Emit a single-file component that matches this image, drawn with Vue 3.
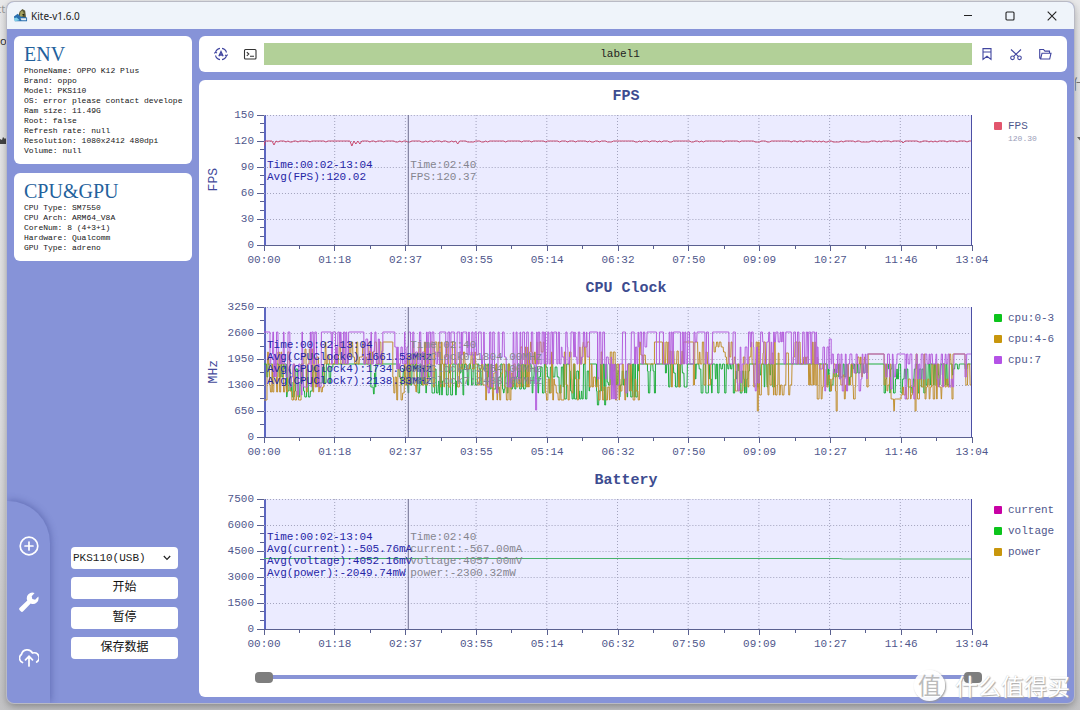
<script setup>
import { ref } from 'vue'

const phoneInfo = [
  'PhoneName: OPPO K12 Plus',
  'Brand: oppo',
  'Model: PKS110',
  'OS: error please contact develope',
  'Ram size: 11.49G',
  'Root: false',
  'Refresh rate: null',
  'Resolution: 1080x2412 480dpi',
  'Volume: null'
]
const chipInfo = [
  'CPU Type: SM7550',
  'CPU Arch: ARM64_V8A',
  'CoreNum: 8 (4+3+1)',
  'Hardware: Qualcomm',
  'GPU Type: adreno'
]
const times = ['00:00', '01:18', '02:37', '03:55', '05:14', '06:32', '07:50', '09:09', '10:27', '11:46', '13:04']

function makeRandom(seed) {
  let s = seed
  return () => {
    s = (s * 16807) % 2147483647
    return s / 2147483647
  }
}

// Each segment is [from, to, levels]; one level draws a plateau, several draw stepped noise.
function trace(segments, seed) {
  const rnd = makeRandom(seed)
  let d = ''
  let last = -1
  for (const [from, to, levels] of segments) {
    let x = from
    while (x < to) {
      let y = levels[Math.floor(rnd() * levels.length)]
      if (y === last && levels.length > 1) y = levels[Math.floor(rnd() * levels.length)]
      last = y
      const hold = levels.length === 1 ? to - x : 0.3 + rnd() * 1.5
      d += (d ? 'L' : 'M') + x.toFixed(1) + ' ' + y
      x += hold
      d += 'L' + Math.min(x, to).toFixed(1) + ' ' + y
      x += 0.4
    }
  }
  return d
}

function fpsTrace() {
  const rnd = makeRandom(77)
  const dips = { 10: 30, 89: 31, 92: 29, 96: 29, 194: 29, 640: 28 }
  let d = 'M0 31L1 26'
  for (let x = 2; x <= 708; x += 2) {
    const key = x in dips ? x : x + 1
    const y = dips[key] ?? (rnd() > 0.72 ? 27 : 26)
    d += `L${x} ${y}`
  }
  return d
}

const greenSegments = [
  [0, 20, [57, 57, 70]], [20, 50, [57, 65, 75, 84, 90, 62]], [50, 69, [57, 60, 76]], [69, 100, [57]],
  [100, 107, [57]], [107, 112, [57, 66, 80, 87]], [112, 134, [57]], [134, 175, [57, 62, 70, 78, 86]],
  [175, 200, [57, 57, 66, 74, 88]], [200, 225, [57, 62, 78]], [225, 262, [57, 57, 70, 82, 86]],
  [262, 300, [57, 60, 70, 80, 86]], [300, 326, [57, 57, 64, 84, 92]], [326, 333, [57]],
  [333, 345, [57, 75, 98, 84]], [345, 376, [57, 64, 78, 90]], [376, 384, [57]], [384, 392, [57, 64, 86]],
  [392, 402, [57]], [402, 424, [57, 57, 66, 80]], [424, 432, [57]], [432, 470, [57, 57, 57, 62, 72, 86]],
  [470, 486, [57, 64, 72, 86]], [486, 494, [57]], [494, 512, [57, 57, 68, 80]], [512, 564, [57]],
  [564, 590, [57, 62, 70, 78, 84]], [590, 604, [57, 57, 66]], [604, 621, [57]],
  [621, 662, [57, 62, 72, 80, 86]], [662, 690, [57, 57, 68, 78]], [690, 708, [57, 57, 57, 62]]
]
const goldSegments = [
  [0, 3, [93]], [3, 26, [57, 45, 57, 78, 85]], [26, 40, [93, 57, 84, 93]], [40, 60, [42, 57, 80, 85, 50]],
  [60, 86, [35, 48, 57, 57]], [86, 104, [35, 50, 57]], [104, 119, [45, 57, 57, 35]], [119, 129, [35]],
  [129, 142, [57, 86, 93, 70]], [142, 168, [35, 48, 57, 78, 85]], [168, 196, [35, 35, 50, 57, 80]],
  [196, 222, [45, 57, 62, 78, 87]], [222, 250, [57, 66, 80, 93, 93]], [250, 266, [40, 57, 72, 80]],
  [266, 282, [35, 35, 45, 57]], [282, 316, [45, 57, 72, 78, 86, 93]], [316, 326, [35, 40, 57]],
  [326, 356, [45, 57, 70, 80, 93]], [356, 376, [57, 72, 84, 93]], [376, 384, [35, 48, 57]],
  [384, 391, [57]], [391, 399, [35]], [399, 420, [35, 44, 57, 57, 80]], [420, 430, [35]],
  [430, 452, [35, 45, 57, 78]], [452, 462, [35, 40, 45]], [462, 472, [35, 50, 57]],
  [472, 480, [57, 72, 84]], [480, 494, [35, 50, 57, 80]], [494, 495, [104]],
  [495, 530, [35, 46, 57, 78, 88]], [530, 554, [35, 35, 50, 57, 78]], [554, 566, [57, 68, 80, 92]],
  [566, 573, [57, 72, 84]], [573, 574, [104]], [574, 592, [57, 68, 78, 92]],
  [592, 605, [50, 57, 70, 80]], [605, 621, [47]], [621, 628, [57, 78, 84]],
  [628, 634, [92, 104]], [634, 638, [92]], [638, 652, [80, 92, 72, 88]], [652, 653, [104]],
  [653, 690, [47, 57, 72, 80, 92]], [690, 702, [47]], [702, 708, [47, 57, 78]]
]
const purpleSegments = [
  [0, 6, [25]], [6, 26, [25, 25, 57, 47, 70]], [26, 38, [57, 70, 80, 88]], [38, 58, [25, 25, 57, 80]],
  [58, 66, [25]], [66, 72, [25, 57]], [72, 86, [25, 25, 57, 40]], [86, 100, [25]],
  [100, 119, [25, 32, 57, 44]], [119, 131, [25]], [131, 146, [25, 40, 57, 62]],
  [146, 176, [25, 25, 57, 45, 70]], [176, 182, [25]], [182, 198, [25, 25, 57]],
  [198, 220, [25, 48, 57, 25]], [220, 248, [25, 50, 64, 80, 86]],
  [248, 272, [25, 25, 57, 72]], [272, 273, [103]], [273, 296, [25, 25, 57]],
  [296, 326, [25, 25, 40, 57, 50]], [326, 334, [25]], [334, 348, [25, 57, 50, 72]],
  [348, 356, [57, 78, 92]], [356, 372, [25, 25, 57, 57, 86]], [372, 386, [25, 40, 57, 25]],
  [386, 393, [25]], [393, 396, [57]], [396, 400, [25]], [400, 410, [25, 57]], [410, 417, [25]],
  [417, 434, [25, 35, 57, 25]], [434, 441, [25]], [441, 452, [25, 57]], [452, 464, [25]],
  [464, 472, [25, 57, 25]], [472, 496, [25, 40, 57, 76, 84]], [496, 520, [25, 25, 57, 35]],
  [520, 554, [25, 25, 25, 57, 57]], [554, 566, [40, 57, 62, 84]], [566, 568, [32]],
  [568, 604, [47, 47, 57, 66, 84, 72]], [604, 621, [47]], [621, 634, [47, 57, 70, 82]],
  [634, 642, [47]], [642, 662, [47, 57, 72, 80, 92]], [662, 692, [47, 47, 57, 72, 80]],
  [692, 702, [47]], [702, 708, [47, 57, 70, 47]]
]

const charts = [
  {
    title: 'FPS', unit: 'FPS', ticks: [150, 120, 90, 60, 30, 0], minor: 3,
    summary: ['Time:00:02-13:04', 'Avg(FPS):120.02'],
    cursor: ['Time:02:40', 'FPS:120.37'],
    legend: [{ name: 'FPS', color: '#e2556d', value: '120.30' }],
    lines: [{ color: '#c8486e', d: fpsTrace() }]
  },
  {
    title: 'CPU Clock', unit: 'MHz', ticks: [3250, 2600, 1950, 1300, 650, 0], minor: 2,
    summary: ['Time:00:02-13:04', 'Avg(CPUClock0):1661.53MHz', 'Avg(CPUClock4):1734.00MHz', 'Avg(CPUClock7):2138.33MHz'],
    cursor: ['Time:02:40', 'CPUClock0:1804.00MHz', 'CPUClock4:2054.00MHz', 'CPUClock7:2438.00MHz'],
    legend: [
      { name: 'cpu:0-3', color: '#0cc41c' },
      { name: 'cpu:4-6', color: '#c8960c' },
      { name: 'cpu:7', color: '#b452e6' }
    ],
    lines: [
      { color: '#1fae3c', d: trace(greenSegments, 411) },
      { color: '#c09030', d: trace(goldSegments, 982) },
      { color: '#b45fdc', d: trace(purpleSegments, 5531) }
    ]
  },
  {
    title: 'Battery', unit: '', ticks: [7500, 6000, 4500, 3000, 1500, 0], minor: 3,
    summary: ['Time:00:02-13:04', 'Avg(current):-505.76mA', 'Avg(voltage):4052.16mV', 'Avg(power):-2049.74mW'],
    cursor: ['Time:02:40', 'current:-567.00mA', 'voltage:4057.00mV', 'power:-2300.32mW'],
    legend: [
      { name: 'current', color: '#c800a4' },
      { name: 'voltage', color: '#0cc41c' },
      { name: 'power', color: '#c8960c' }
    ],
    lines: [{ color: '#48b46c', d: 'M0 59.5L576 59.5L580 60L708 60' }]
  }
]

function minorY(n) {
  return Array.from({ length: 5 * n + 1 }, (_, i) => i).filter(i => i % n).map(i => (i * 130) / (5 * n))
}

const device = ref('PKS110(USB)')
const rangeStart = ref(0)
const rangeEnd = ref(100)
</script>

<template>
  <div class="desktop">
    <div class="behind">
      <span class="frag frag-a">ct</span>
      <span class="frag frag-b">to</span>
      <span class="frag frag-c">什</span>
      <svg class="frag frag-d" viewBox="0 0 10 6"><path d="M0 0h10L5 6z" /></svg>
      <svg class="frag frag-e" viewBox="0 0 7 8"><path d="M0 8V3l2 1 1-3 2 2 2-2v7z" /></svg>
    </div>
    <div class="window">
      <header class="titlebar">
        <svg class="app-icon" viewBox="0 0 16 16">
          <path d="M5 11 7 4l3-3 3 2 1 8-3 2z" fill="#5d5a35" />
          <path d="M8 4l2-1 2 3-2 3-3 1z" fill="#a7a45f" />
          <path d="M1 9l4-3 3 3 7 1v4H2z" fill="#2a6fae" />
          <path d="M1 11l3-1 3 3-5 1z" fill="#7fd0ea" />
          <path d="M8 11h6v2H9z" fill="#e8eef2" />
          <circle cx="11" cy="7" r="1" fill="#23230f" />
        </svg>
        <h1>Kite-v1.6.0</h1>
        <button class="win" aria-label="Minimize"><svg viewBox="0 0 10 10"><path d="M1 4.500h8" /></svg></button>
        <button class="win" aria-label="Maximize"><svg viewBox="0 0 10 10"><rect x="1" y="1" width="8" height="8" rx="1" /></svg></button>
        <button class="win" aria-label="Close"><svg viewBox="0 0 10 10"><path d="M.7.7l8.600 8.600M9.300.7.7 9.300" /></svg></button>
      </header>

      <div class="body">
        <aside class="sidebar">
          <section class="card info">
            <h2>ENV</h2>
            <p v-for="line in phoneInfo" :key="line">{{ line }}</p>
          </section>
          <section class="card info">
            <h2>CPU&amp;GPU</h2>
            <p v-for="line in chipInfo" :key="line">{{ line }}</p>
          </section>
          <div class="lower">
            <nav class="rail">
              <button aria-label="Add">
                <svg viewBox="0 0 20 20"><circle cx="10" cy="10" r="8.800" /><path d="M10 6v8M6 10h8" /></svg>
              </button>
              <button aria-label="Tools">
                <svg viewBox="0 0 20 20"><path class="solid" d="M19.300 4.600a5.600 5.600 0 0 1-7.600 6.800L4.200 19.200a1.700 1.700 0 0 1-2.500 0l-1-1a1.700 1.700 0 0 1 0-2.400L8.300 8.600A5.700 5.700 0 0 1 15.600 1l-2.900 3.200.6 2.900 2.800.6z" /></svg>
              </button>
              <button aria-label="Upload">
                <svg viewBox="0 0 20 20"><path d="M3.500 14.500A4.600 4.600 0 0 1 2.400 6.500 6 6 0 0 1 13.500 5a5 5 0 0 1 4.200 9M10 18V8.500M6.500 11.800 10 8.300l3.500 3.500" /></svg>
              </button>
            </nav>
            <div class="controls">
              <div class="picker">
                <select v-model="device" aria-label="Device"><option>PKS110(USB)</option></select>
                <svg viewBox="0 0 8 6"><path d="M.8 1 4 4.400 7.200 1" /></svg>
              </div>
              <button>开始</button>
              <button>暂停</button>
              <button>保存数据</button>
            </div>
          </div>
        </aside>

        <div class="content">
          <div class="card toolbar">
            <div class="tools left">
              <button aria-label="Auto">
                <svg viewBox="0 0 14 14"><path d="M1.500 5.500A5.500 5.500 0 0 1 6 1.400M8 1.400a5.500 5.500 0 0 1 4.500 4.100M12.500 8.500A5.500 5.500 0 0 1 8 12.600M6 12.600a5.500 5.500 0 0 1-4.500-4.100M.4 6.500l1.200-1.400 1.400 1M13.600 7.500l-1.200 1.400-1.400-1" /><path d="M4.900 9.300 7 4.600l2.100 4.700M5.600 8h2.800" stroke-width="1.400" /></svg>
              </button>
              <button class="dark" aria-label="Terminal">
                <svg viewBox="0 0 14 14"><rect x="1.500" y="2.500" width="11.500" height="9.500" rx="1" /><path d="M3.800 5.200 5.800 7 3.800 8.800M7 9.300h4" /></svg>
              </button>
            </div>
            <div class="label-bar">label1</div>
            <div class="tools right">
              <button aria-label="Bookmark">
                <svg viewBox="0 0 14 14"><path d="M3 1.600h8v10.800L7 9.300l-4 3.100zM3 5h8" /></svg>
              </button>
              <button aria-label="Cut">
                <svg viewBox="0 0 14 14"><circle cx="3.500" cy="10.800" r="1.800" /><circle cx="10.500" cy="10.800" r="1.800" /><path d="M2 2.500 9.300 9.400M12 2.500 4.700 9.400" /></svg>
              </button>
              <button aria-label="Open">
                <svg viewBox="0 0 14 14"><path d="M2.600 12 1.700 11V2.500H5.500l1.400 1.600h4.600V6M2.600 12 4 6.200h9L11.700 12z" /></svg>
              </button>
            </div>
          </div>

          <main class="card charts">
            <section v-for="c in charts" :key="c.title" class="chart">
              <h3>{{ c.title }}</h3>
              <div class="unit"><span>{{ c.unit }}</span></div>
              <div class="yaxis"><span v-for="t in c.ticks" :key="t">{{ t }}</span></div>
              <svg class="ticks" viewBox="0 0 7 130" preserveAspectRatio="none">
                <path v-for="i in 6" :key="i" :d="`M0 ${(i - 1) * 26}h7`" />
                <path v-for="y in minorY(c.minor)" :key="y" :d="`M3 ${y}h4`" />
              </svg>
              <div class="plot">
                <svg viewBox="0 0 708 130" preserveAspectRatio="none">
                  <path v-for="i in 5" :key="'h' + i" class="grid" :d="`M0 ${(i - 1) * 26}.5H708`" />
                  <path v-for="i in 9" :key="'v' + i" class="grid" :d="`M${i * 70.8} 0V130`" />
                  <path v-for="l in c.lines" :key="l.color" class="series" :d="l.d" :stroke="l.color" />
                  <path class="cursor-line" d="M144.500 0V130" />
                </svg>
                <div class="readout">
                  <div class="summary"><p v-for="s in c.summary" :key="s">{{ s }}</p></div>
                  <div class="cursor"><p v-for="s in c.cursor" :key="s">{{ s }}</p></div>
                </div>
              </div>
              <ul class="legend">
                <li v-for="l in c.legend" :key="l.name">
                  <i :style="{ background: l.color }"></i>{{ l.name }}
                  <small v-if="l.value">{{ l.value }}</small>
                </li>
              </ul>
              <svg class="xticks" viewBox="0 0 708 6" preserveAspectRatio="none">
                <path v-for="i in 11" :key="i" :d="`M${(i - 1) * 70.8} 0v6`" />
                <path v-for="i in 10" :key="'m' + i" :d="`M${i * 70.8 - 35.400} 0v4`" />
              </svg>
              <div class="xaxis"><span v-for="t in times" :key="t">{{ t }}</span></div>
            </section>
            <div class="range">
              <div class="track"></div>
              <input v-model="rangeStart" type="range" min="0" max="100" aria-label="Range start" />
              <input v-model="rangeEnd" type="range" min="0" max="100" aria-label="Range end" />
            </div>
          </main>
        </div>
      </div>
    </div>
    <div class="watermark"><span class="seal">值</span><span>什么值得买</span></div>
  </div>
</template>

<style>
html, body, #app { height: 100%; margin: 0; }
body { overflow: hidden; }
</style>

<style scoped>
* { box-sizing: border-box; }
h1, h2, h3, p, ul { margin: 0; padding: 0; }
button { border: 0; padding: 0; background: none; font: inherit; color: inherit; }
svg { display: block; fill: none; }
.desktop {
  position: relative;
  height: 100%;
  padding: 2px 6px 7px 7px;
  overflow: hidden;
  background: linear-gradient(#e9e9ea, #dedee0 60%, #c3c3c5);
  font-family: "Liberation Mono", "Noto Sans CJK SC", monospace;
  font-size: 11px;
  line-height: 12px;
  white-space: nowrap;
}
.behind { position: absolute; inset: 0; color: #333; font-family: "Noto Sans", "Noto Sans CJK SC", sans-serif; }
.frag { position: absolute; line-height: 16px; }
.frag-a { left: -4px; top: 1px; color: #999; }
.frag-b { left: -4px; top: 33px; }
.frag-c { right: -6px; top: 76px; font-size: 14px; color: #777; }
.frag-d { right: -7px; top: 137px; width: 10px; height: 6px; fill: #666; }
.frag-e { left: 0; top: 136px; width: 7px; height: 8px; fill: #444; }
.window {
  position: relative;
  height: 100%;
  display: flex;
  flex-direction: column;
  border-radius: 7px;
  overflow: hidden;
  background: #8693d8;
  box-shadow: 0 0 0 1px #b9bac4, 0 3px 8px rgba(0, 0, 0, .35);
}
.titlebar { display: flex; align-items: center; height: 27px; padding: 0 1px 0 6px; background: #eff4fa; flex: none; }
.app-icon { width: 15px; height: 15px; }
h1 { flex: 1; margin-left: 3px; font: 400 10px/14px "Noto Sans", sans-serif; color: #222; }
.win { width: 42px; height: 26px; display: grid; place-items: center; }
.win svg { width: 10px; height: 10px; stroke: #222; stroke-width: 1.1; }
.body { flex: 1; display: flex; min-height: 0; }
.sidebar { flex: none; width: 192px; display: flex; flex-direction: column; padding-top: 7px; }
.card { background: #fff; border-radius: 6px; }
.info { margin: 0 7px 9px; padding: 6px 0 8px 10px; overflow: hidden; font-size: 8px; line-height: 10px; color: #161616; }
h2 { font: 400 20px/24px "Liberation Serif", serif; color: #23619c; }
.lower { flex: 1; display: flex; align-items: flex-end; }
.rail {
  width: 43px;
  height: 202px;
  display: flex;
  flex-direction: column;
  align-items: center;
  gap: 36px;
  padding-top: 35px;
  border-radius: 0 42px 0 0;
  box-shadow: 1px -1px 7px rgba(45, 55, 130, .4);
}
.rail button { width: 20px; height: 20px; }
.rail svg { width: 20px; height: 20px; stroke: #fff; stroke-width: 1.7; stroke-linecap: round; }
.rail .solid { fill: #fff; stroke: none; }
.controls { display: flex; flex-direction: column; gap: 8px; flex: 1; margin: 0 21px 44px; }
.controls > button, .picker { height: 22px; background: #fff; border-radius: 4px; color: #111; font-size: 12px; line-height: 22px; }
.picker { position: relative; }
.picker select { width: 100%; height: 22px; border: 0; padding: 0 2px; background: none; appearance: none; font-family: inherit; font-size: 11px; color: #222; }
.picker svg { position: absolute; right: 7px; top: 8px; width: 8px; height: 6px; stroke: #222; stroke-width: 1.2; pointer-events: none; }
.content { flex: 1; min-width: 0; display: flex; flex-direction: column; gap: 8px; padding: 7px 7px 6px 0; }
.toolbar { display: flex; align-items: center; height: 36px; flex: none; }
.tools { display: flex; align-items: center; color: #4146a0; }
.tools.left { width: 65px; padding-left: 15px; gap: 15px; }
.tools.right { width: 95px; padding-left: 8px; gap: 15px; }
.tools button { width: 14px; height: 14px; }
.tools svg { width: 14px; height: 14px; stroke: currentColor; stroke-width: 1.1; }
.tools .dark { color: #333; }
.label-bar { flex: 1; height: 22px; padding-left: 4px; background: #b2d098; color: #222; text-align: center; line-height: 23px; }
.charts { flex: 1; min-height: 0; }
.chart {
  display: grid;
  grid-template: 35px 130px 6px 21px / 29px 29px 7px 1fr 95px;
  color: #50578c;
}
h3 { grid-area: 1 / 4; padding: 8px 0 0 16px; font-size: 15px; line-height: 18px; font-weight: 700; text-align: center; color: #3d4c90; }
.unit { grid-area: 2 / 1; display: grid; place-items: center; font-size: 13px; color: #43499a; }
.unit span { writing-mode: vertical-rl; transform: rotate(180deg); }
.yaxis { grid-area: 2 / 2; display: flex; flex-direction: column; justify-content: space-between; align-items: flex-end; padding-right: 3px; }
.yaxis span { display: flex; align-items: center; height: 0; }
.ticks { grid-area: 2 / 3; width: 100%; height: 100%; overflow: visible; stroke: #5a6090; shape-rendering: crispEdges; }
.xticks { grid-area: 3 / 4; width: 100%; height: 6px; overflow: visible; stroke: #5a6090; shape-rendering: crispEdges; }
.plot { grid-area: 2 / 4; position: relative; background: #ebebff; border-right: 1px solid #4c4fa4; box-shadow: inset 2px 0 #5c66c0, 0 1px #5a6090; }
.plot > svg { width: 100%; height: 130px; }
.grid { stroke: #a2a3bd; stroke-dasharray: 1 2; shape-rendering: crispEdges; }
.series { stroke-width: 1; }
.cursor-line { stroke: #6c6c8e; shape-rendering: crispEdges; }
.readout { position: absolute; inset: 0 0 19px 0; display: flex; align-items: center; color: #2524a6; }
.summary { width: 20.400%; padding-left: 3px; }
.cursor { color: #85858f; padding-left: 2px; }
.legend { grid-area: 2 / 5; list-style: none; padding-left: 22px; display: flex; flex-direction: column; gap: 9px; padding-top: 5px; }
.legend li { display: grid; grid-template-columns: 8px 1fr; column-gap: 6px; align-items: center; }
.legend i { width: 8px; height: 8px; border-radius: 1px; }
.legend small { grid-column: 2; font-size: 8px; line-height: 14px; color: #999cb8; }
.xaxis { grid-area: 4 / 4; display: flex; justify-content: space-between; padding-top: 3px; }
.xaxis span { width: 0; display: flex; justify-content: center; }
.range { position: relative; height: 20px; margin: 11px 85px 0 56px; }
.track { position: absolute; left: 10px; right: 10px; top: 8px; height: 4px; background: #8994d6; }
.range input { position: absolute; left: 0; top: 0; width: 100%; height: 20px; margin: 0; background: none; appearance: none; pointer-events: none; }
.range input::-webkit-slider-thumb { appearance: none; width: 18px; height: 11px; border-radius: 4px; background: #7e7e7e; pointer-events: auto; }
.watermark {
  position: absolute;
  right: 10px;
  bottom: 9px;
  display: flex;
  align-items: center;
  gap: 10px;
  height: 32px;
  font: 400 23px/32px "Noto Sans CJK SC", sans-serif;
  color: #fff;
  text-shadow: 1px 1px 1px #aaa, 0 0 1px #bbb;
  pointer-events: none;
}
.seal { width: 31px; height: 31px; border-radius: 50%; background: rgba(255, 255, 255, .92); box-shadow: 1px 1px 2px #999; color: #bbb; text-shadow: none; text-align: center; line-height: 29px; }
</style>
